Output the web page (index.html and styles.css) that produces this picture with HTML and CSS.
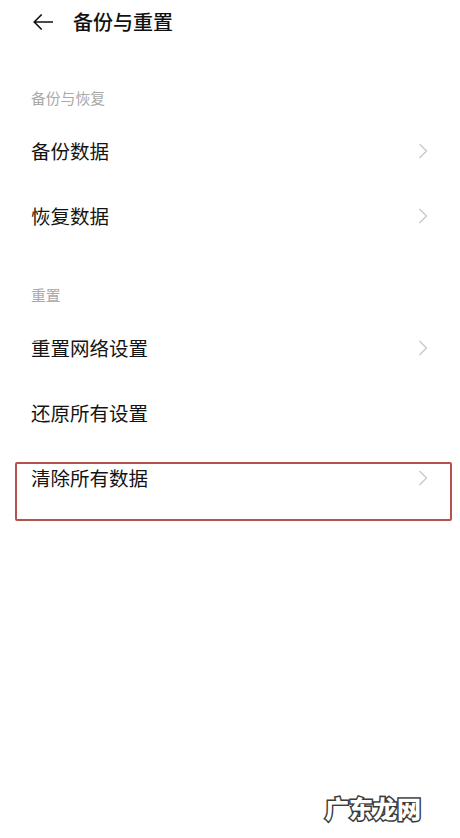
FILE: index.html
```html
<!DOCTYPE html>
<html lang="zh-CN">
<head>
<meta charset="utf-8">
<title>备份与重置</title>
<link rel="stylesheet" href="styles.css">
</head>
<body>
<div class="page">
  <header class="topbar">
    <svg class="back" width="20" height="16" viewBox="0 0 20 16" aria-hidden="true">
      <path d="M19.5 8H1.2M8.2 1L1.2 8l7 7" fill="none" stroke="#111" stroke-width="1.7" stroke-linecap="round" stroke-linejoin="round"/>
    </svg>
    <h1 class="title">备份与重置</h1>
  </header>

  <section class="group first">
    <div class="group-title">备份与恢复</div>
    <div class="row"><span class="label">备份数据</span><svg class="chev" width="10" height="16" viewBox="0 0 10 16"><path d="M1.5 1l7 7-7 7" fill="none" stroke="#c9c9c9" stroke-width="1.4"/></svg></div>
    <div class="row"><span class="label">恢复数据</span><svg class="chev" width="10" height="16" viewBox="0 0 10 16"><path d="M1.5 1l7 7-7 7" fill="none" stroke="#c9c9c9" stroke-width="1.4"/></svg></div>
  </section>

  <section class="group second">
    <div class="group-title">重置</div>
    <div class="row"><span class="label">重置网络设置</span><svg class="chev" width="10" height="16" viewBox="0 0 10 16"><path d="M1.5 1l7 7-7 7" fill="none" stroke="#c9c9c9" stroke-width="1.4"/></svg></div>
    <div class="row"><span class="label">还原所有设置</span></div>
    <div class="row highlighted"><span class="label">清除所有数据</span><svg class="chev" width="10" height="16" viewBox="0 0 10 16"><path d="M1.5 1l7 7-7 7" fill="none" stroke="#c9c9c9" stroke-width="1.4"/></svg><span class="mark"></span></div>
  </section>

  <div class="watermark">广东龙网</div>
</div>
</body>
</html>
```

FILE: styles.css
```css
* { box-sizing: border-box; }
html, body { margin: 0; padding: 0; background: #fff; }
body {
  font-family: "Noto Sans CJK SC", "Noto Sans", sans-serif;
  color: #111;
}
.page {
  position: relative;
  width: 460px;
  height: 838px;
  overflow: hidden;
}
.topbar {
  height: 44px;
  display: flex;
  align-items: center;
  padding-left: 33px;
  gap: 20px;
}
.back { display: block; }
.title {
  margin: 0;
  font-size: 20px;
  font-weight: 500;
  line-height: 24px;
  color: #111;
}
.group {
  padding: 0 32px 0 31px;
}
.group.first { margin-top: 44px; }
.group.second { margin-top: 37px; }
.group-title {
  height: 20px;
  line-height: 20px;
  font-size: 14.8px;
  color: #a9a9a9;
  margin-bottom: 10px;
}
.row {
  position: relative;
  height: 65px;
  display: flex;
  align-items: center;
  justify-content: space-between;
}
.label {
  font-size: 19.5px;
  line-height: 26px;
  color: #141414;
}
.chev { display: block; flex: none; }
.mark {
  position: absolute;
  left: -16px;
  right: -24px;
  top: 17px;
  bottom: -11px;
  border: 2px solid #b5524e;
  border-radius: 2px;
  pointer-events: none;
}
.watermark {
  position: absolute;
  left: 325px;
  top: 792px;
  font-size: 24px;
  font-weight: 900;
  letter-spacing: 0;
  color: #fff;
  -webkit-text-stroke: 3px #3a3a3a;
  paint-order: stroke fill;
  line-height: 32px;
}
```
